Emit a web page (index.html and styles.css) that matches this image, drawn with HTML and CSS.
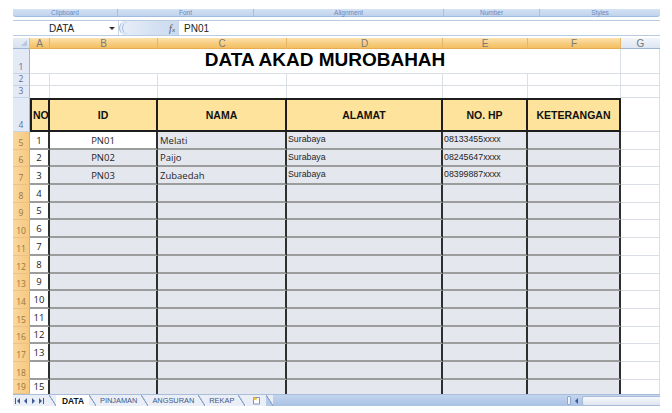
FILE: index.html
```html
<!DOCTYPE html>
<html>
<head>
<meta charset="utf-8">
<link rel="stylesheet" href="styles.css">
</head>
<body>
<div class="app">
  <div class="ribbon">
    <div class="grp g1"><span>Clipboard</span></div>
    <div class="grp g2"><span>Font</span></div>
    <div class="grp g3"><span>Alignment</span></div>
    <div class="grp g4"><span>Number</span></div>
    <div class="grp g5"><span>Styles</span></div>
  </div>

  <div class="fbar">
    <div class="namebox"><span class="nb-text">DATA</span><span class="nb-arrow"></span></div>
    <div class="fbtn"><span class="knob"></span><span class="fx">f<i>x</i></span></div>
    <div class="finput">PN01</div>
  </div>

  <div class="sheet">
    <!-- column headers -->
    <div class="corner"><span class="tri"></span></div>
    <div class="ch sel">A</div><div class="ch sel">B</div><div class="ch sel">C</div><div class="ch sel">D</div><div class="ch sel">E</div><div class="ch sel">F</div><div class="ch gr">G</div>

    <!-- row 1 -->
    <div class="rh">1</div>
    <div class="title">DATA AKAD MUROBAHAH</div>
    <div class="c"></div>

    <!-- row 2 -->
    <div class="rh">2</div>
    <div class="c"></div><div class="c"></div><div class="c"></div><div class="c"></div><div class="c"></div><div class="c"></div><div class="c"></div>

    <!-- row 3 -->
    <div class="rh">3</div>
    <div class="c nb"></div><div class="c nb"></div><div class="c nb"></div><div class="c nb"></div><div class="c nb"></div><div class="c nb"></div><div class="c"></div>

    <!-- row 4 header -->
    <div class="rh">4</div>
    <div class="h no">NO</div><div class="h">ID</div><div class="h">NAMA</div><div class="h">ALAMAT</div><div class="h">NO. HP</div><div class="h">KETERANGAN</div><div class="c"></div>

    <!-- row 5 -->
    <div class="rh sel">5</div>
    <div class="n">1</div><div class="d ctr act">PN01</div><div class="d lft">Melati</div><div class="d top">Surabaya</div><div class="d top">08133455xxxx</div><div class="d"></div><div class="c"></div>
    <!-- row 6 -->
    <div class="rh sel">6</div>
    <div class="n">2</div><div class="d ctr">PN02</div><div class="d lft">Paijo</div><div class="d top">Surabaya</div><div class="d top">08245647xxxx</div><div class="d"></div><div class="c"></div>
    <!-- row 7 -->
    <div class="rh sel">7</div>
    <div class="n">3</div><div class="d ctr">PN03</div><div class="d lft">Zubaedah</div><div class="d top">Surabaya</div><div class="d top">08399887xxxx</div><div class="d"></div><div class="c"></div>
    <!-- row 8 -->
    <div class="rh sel">8</div>
    <div class="n">4</div><div class="d"></div><div class="d"></div><div class="d"></div><div class="d"></div><div class="d"></div><div class="c"></div>
    <!-- row 9 -->
    <div class="rh sel">9</div>
    <div class="n">5</div><div class="d"></div><div class="d"></div><div class="d"></div><div class="d"></div><div class="d"></div><div class="c"></div>
    <!-- row 10 -->
    <div class="rh sel">10</div>
    <div class="n">6</div><div class="d"></div><div class="d"></div><div class="d"></div><div class="d"></div><div class="d"></div><div class="c"></div>
    <!-- row 11 -->
    <div class="rh sel">11</div>
    <div class="n">7</div><div class="d"></div><div class="d"></div><div class="d"></div><div class="d"></div><div class="d"></div><div class="c"></div>
    <!-- row 12 -->
    <div class="rh sel">12</div>
    <div class="n">8</div><div class="d"></div><div class="d"></div><div class="d"></div><div class="d"></div><div class="d"></div><div class="c"></div>
    <!-- row 13 -->
    <div class="rh sel">13</div>
    <div class="n">9</div><div class="d"></div><div class="d"></div><div class="d"></div><div class="d"></div><div class="d"></div><div class="c"></div>
    <!-- row 14 -->
    <div class="rh sel">14</div>
    <div class="n">10</div><div class="d"></div><div class="d"></div><div class="d"></div><div class="d"></div><div class="d"></div><div class="c"></div>
    <!-- row 15 -->
    <div class="rh sel">15</div>
    <div class="n">11</div><div class="d"></div><div class="d"></div><div class="d"></div><div class="d"></div><div class="d"></div><div class="c"></div>
    <!-- row 16 -->
    <div class="rh sel">16</div>
    <div class="n">12</div><div class="d"></div><div class="d"></div><div class="d"></div><div class="d"></div><div class="d"></div><div class="c"></div>
    <!-- row 17 -->
    <div class="rh sel">17</div>
    <div class="n">13</div><div class="d"></div><div class="d"></div><div class="d"></div><div class="d"></div><div class="d"></div><div class="c"></div>
    <!-- row 18 -->
    <div class="rh sel">18</div>
    <div class="n"></div><div class="d"></div><div class="d"></div><div class="d"></div><div class="d"></div><div class="d"></div><div class="c"></div>
    <!-- row 19 -->
    <div class="rh sel">19</div>
    <div class="n">15</div><div class="d"></div><div class="d"></div><div class="d"></div><div class="d"></div><div class="d"></div><div class="c"></div>
  </div>

  <div class="tabbar">
    <div class="nav">
      <svg width="32" height="8" viewBox="0 0 32 8">
        <rect x="1" y="1" width="1" height="6" fill="#3d5b93"/>
        <path d="M6 1 L3 4 L6 7 Z" fill="#3d5b93"/>
        <path d="M13 1 L10 4 L13 7 Z" fill="#3d5b93"/>
        <path d="M18 1 L21 4 L18 7 Z" fill="#3d5b93"/>
        <path d="M25 1 L28 4 L25 7 Z" fill="#3d5b93"/>
        <rect x="29" y="1" width="1" height="6" fill="#3d5b93"/>
      </svg>
    </div>
    <span class="sep"></span>
    <div class="tab active">DATA</div>
    <span class="sep"></span>
    <div class="tab">PINJAMAN</div>
    <span class="sep"></span>
    <div class="tab">ANGSURAN</div>
    <span class="sep"></span>
    <div class="tab">REKAP</div>
    <span class="sep"></span>
    <div class="tab newtab">
      <svg width="12" height="9" viewBox="0 0 12 9">
        <path d="M2.5 1.5 H8.5 V8 H2.5 Z" fill="#fff" stroke="#7f93b5" stroke-width="1"/>
        <path d="M4 0.5 L5 2 L6.5 2 L5.3 3 L5.8 4.5 L4 3.6 L2.3 4.5 L2.8 3 L1.5 2 L3 2 Z" fill="#f2b928"/>
      </svg>
    </div>
    <span class="sep last"></span>
    <div class="fill"></div>
    <div class="hscroll">
      <span class="split"></span>
      <span class="larrow"></span>
      <span class="track"></span>
    </div>
  </div>
</div>
</body>
</html>
```

FILE: styles.css
```css
* {
  box-sizing: border-box;
  margin: 0;
  padding: 0;
}

body {
  width: 672px;
  height: 413px;
  overflow: hidden;
  background: #ffffff;
  font-family: "Liberation Sans", Arial, sans-serif;
}

.app {
  margin-left: 13px;
  width: 647px;
  padding-top: 9px;
}

/* ribbon group label strip */
.ribbon {
  display: flex;
  height: 8px;
  background: linear-gradient(#d4e2f4, #c0d3ec);
  border-bottom: 1px solid #a3bbdc;
  border-radius: 0 0 3px 3px;
}

.grp {
  text-align: center;
  border-right: 1px solid #a8bedd;
  font-size: 6.5px;
  line-height: 8px;
  color: #6d88ba;
}

.g1 { width: 105px; }
.g2 { width: 136px; }
.g3 { width: 190px; }
.g4 { width: 96px; }
.g5 { width: 120px; border-right: 0; }

/* formula bar */
.fbar {
  display: flex;
  height: 16px;
  margin-top: 3px;
  border-top: 1px solid #b9cbe3;
  border-bottom: 1px solid #b9cbe3;
  background: #fff;
}

.namebox {
  width: 106px;
  display: flex;
  align-items: center;
  padding-left: 36px;
  font-size: 10px;
  color: #1d1d1d;
  border-right: 1px solid #c9d6e8;
}

.nb-text {
  flex: 1;
}

.nb-arrow {
  width: 0;
  height: 0;
  margin-right: 3px;
  border-left: 3px solid transparent;
  border-right: 3px solid transparent;
  border-top: 3px solid #333;
}

.fbtn {
  width: 59px;
  display: flex;
  align-items: center;
  justify-content: space-between;
  padding-right: 3px;
  background: linear-gradient(90deg, #e9eff8, #d4e1f2 60%, #cbdaf0);
  border-left: 1px solid #9fb5d6;
  border-radius: 8px 0 0 8px;
}

.knob {
  width: 8px;
  height: 12px;
  margin-left: 2px;
  border-left: 1px solid #a3b9d9;
  border-radius: 6px 0 0 6px;
}

.fx {
  font-family: "Liberation Serif", serif;
  font-style: italic;
  font-size: 10px;
  color: #555;
}

.fx i {
  font-size: 7px;
}

.finput {
  flex: 1;
  display: flex;
  align-items: center;
  padding-left: 5px;
  font-size: 10px;
  color: #1d1d1d;
  border-left: 1px solid #c9d6e8;
}

/* sheet grid */
.sheet {
  margin-top: 2px;
  height: 356px;
  overflow: hidden;
  display: grid;
  grid-template-columns: 17px 20px 108px 129px 156px 85px 93px 39px;
  grid-template-rows: 11px 25px 12px 12px 34px repeat(14, 17.7px) 14px;
}

/* last visible row is cut by the tab bar */
.sheet > :nth-last-child(-n+8) {
  border-bottom: 0;
}

.corner {
  position: relative;
  background: linear-gradient(#e6edf6, #d7e1ee);
  border-right: 1px solid #b2c4dc;
  border-bottom: 1px solid #9eb5d3;
}

.corner .tri {
  position: absolute;
  right: 2px;
  bottom: 2px;
  width: 0;
  height: 0;
  border-left: 6px solid transparent;
  border-bottom: 6px solid #b9c9dd;
}

.ch {
  font-size: 10px;
  line-height: 11px;
  text-align: center;
  color: #7a7a7a;
}

.ch.sel {
  background: linear-gradient(#fbe2ae, #f7cb7c 60%, #f3bf62);
  border-right: 1px solid #e7b766;
  border-bottom: 1px solid #e5ad50;
}

.ch.gr {
  background: linear-gradient(#f2f6fb, #dde6f2);
  border-bottom: 1px solid #9eb5d3;
  color: #777;
}

.rh {
  display: flex;
  align-items: flex-end;
  justify-content: center;
  padding-bottom: 1px;
  font-family: "Open Sans", sans-serif;
  font-size: 8.5px;
  line-height: 10px;
  color: #5b6f95;
  background: #e3eaf5;
  border-right: 1px solid #9eb6d3;
  border-bottom: 1px solid #c7d4e6;
}

.rh.sel {
  background: linear-gradient(90deg, #fad7a0, #f6c97e);
  color: #9a7440;
  border-bottom: 1px solid #eec086;
  border-right: 1px solid #e5ad50;
}

.c {
  border-right: 1px solid #dadee5;
  border-bottom: 1px solid #dadee5;
}

.c.nb {
  border-bottom: 0;
}

.title {
  grid-column: span 6;
  display: flex;
  align-items: flex-end;
  justify-content: center;
  padding-bottom: 3px;
  font-size: 19px;
  font-weight: bold;
  line-height: 20px;
  color: #000;
  border-right: 1px solid #dadee5;
  border-bottom: 1px solid #dadee5;
}

.h {
  display: flex;
  align-items: center;
  justify-content: center;
  background: #fde39c;
  border-top: 2px solid #1e1e1e;
  border-right: 2px solid #1e1e1e;
  border-bottom: 2px solid #1e1e1e;
  font-size: 10.5px;
  font-weight: bold;
  color: #111;
}

.h.no {
  justify-content: flex-start;
  padding-left: 1px;
  border-left: 2px solid #1e1e1e;
}

.n {
  display: flex;
  align-items: flex-end;
  justify-content: center;
  padding-bottom: 2px;
  background: #fff;
  font-family: "Open Sans", sans-serif;
  font-size: 9.5px;
  line-height: 11px;
  color: #222;
  border-right: 2px solid #2e2e2e;
  border-bottom: 2px solid #9c9c9c;
}

.d {
  display: flex;
  background: #e5e7ef;
  border-right: 2px solid #2e2e2e;
  border-bottom: 2px solid #9c9c9c;
  color: #1f1f1f;
}

.d.act {
  background: #fff;
}

.d.ctr {
  align-items: flex-end;
  justify-content: center;
  padding-bottom: 2px;
  font-family: "Open Sans", sans-serif;
  font-size: 9.5px;
  line-height: 11px;
}

.d.lft {
  align-items: flex-end;
  padding-left: 2px;
  padding-bottom: 2px;
  font-family: "Open Sans", sans-serif;
  font-size: 9.5px;
  line-height: 11px;
}

.d.top {
  align-items: flex-start;
  padding-left: 1px;
  padding-top: 2px;
  font-size: 8.8px;
  line-height: 10px;
}

/* sheet tabs bar */
.tabbar {
  display: flex;
  align-items: stretch;
  height: 12px;
  background: #eaeff7;
  border-top: 1px solid #a9bcd9;
}

.nav {
  width: 36px;
  display: flex;
  align-items: center;
  padding-left: 1px;
}

.sep {
  width: 7px;
  background: linear-gradient(to top right, transparent 44%, #8ea4c8 48%, #8ea4c8 54%, transparent 58%);
}

.tab {
  display: flex;
  align-items: center;
  padding: 0 4px;
  font-size: 7.4px;
  color: #3e5585;
}

.tab.active {
  background: #fff;
  font-size: 8.4px;
  font-weight: bold;
  color: #111;
  padding: 0 5px 0 6px;
}

.newtab {
  padding: 0 3px 0 6px;
}

.sep.last {
  background: linear-gradient(to top right, #b5c9e8 44%, #8ea4c8 48%, #8ea4c8 54%, transparent 58%);
}

.fill {
  flex: 1;
  background: linear-gradient(#c3d5ee, #a9c1e5);
}

.hscroll {
  width: 95px;
  display: flex;
  align-items: center;
  background: linear-gradient(#c3d5ee, #a9c1e5);
}

.split {
  width: 4px;
  height: 9px;
  margin-left: 2px;
  background: #eef3fa;
  border: 1px solid #8ea6cb;
  border-radius: 1px;
}

.larrow {
  width: 0;
  height: 0;
  margin-left: 4px;
  margin-right: 4px;
  border-top: 3px solid transparent;
  border-bottom: 3px solid transparent;
  border-right: 3px solid #3d5b93;
}

.track {
  flex: 1;
  height: 10px;
  background: linear-gradient(#f5f7fb, #dfe6f0);
  border: 1px solid #a7bad7;
  border-right: 0;
  border-radius: 2px 0 0 2px;
}
```
